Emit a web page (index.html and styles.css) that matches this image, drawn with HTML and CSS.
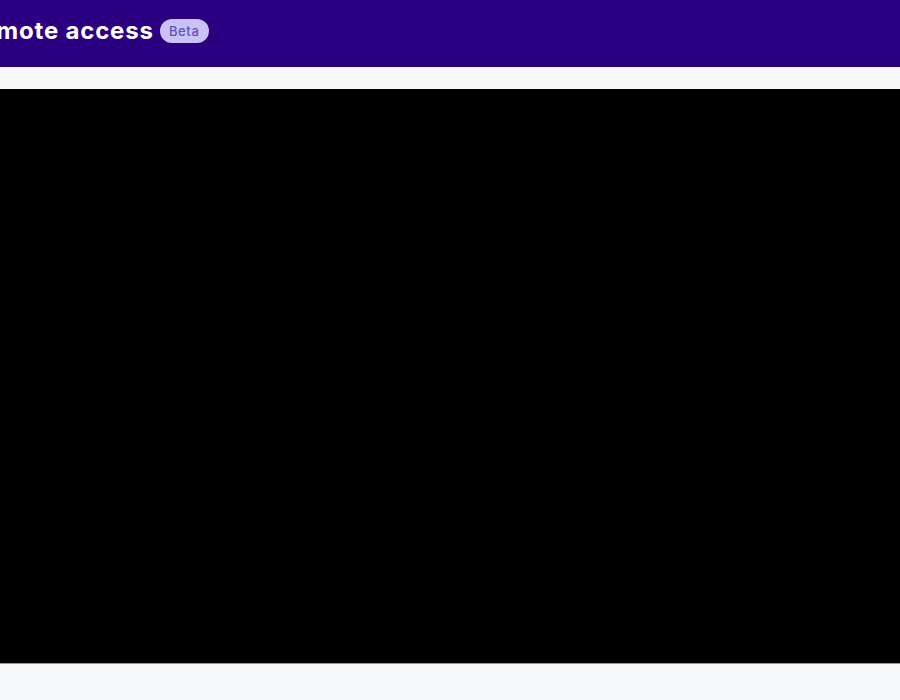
FILE: index.html
```html
<!DOCTYPE html>
<html lang="en">
<head>
<meta charset="utf-8">
<title>Remote access</title>
<link rel="stylesheet" href="styles.css">
</head>
<body>
<header class="topbar">
  <h1 class="title">Remote access</h1>
  <span class="badge">Beta</span>
</header>
<main class="content">
  <div class="screen"></div>
</main>
</body>
</html>
```
FILE: styles.css
```css
html, body {
  margin: 0;
  padding: 0;
  background: #f8f9fb;
  overflow: hidden;
  font-family: Inter, "Open Sans", "Liberation Sans", sans-serif;
}
.topbar {
  height: 67px;
  background: #2b0081;
  display: flex;
  align-items: center;
  gap: 6px;
  padding-bottom: 5px;
  box-sizing: border-box;
}
.title {
  margin: 0 0 0 -35px;
  color: #ffffff;
  font-size: 24px;
  font-weight: 700;
  letter-spacing: 0.8px;
  white-space: nowrap;
  line-height: 1;
}
.badge {
  display: inline-flex;
  align-items: center;
  justify-content: center;
  width: 49px;
  height: 24px;
  border-radius: 12px;
  background: #c9c3f5;
  color: #5f53b5;
  font-size: 13px;
  font-weight: 500;
  letter-spacing: 0.6px;
  box-sizing: border-box;
}
.content {
  padding-top: 22px;
}
.screen {
  height: 574px;
  background: #000000;
  border-bottom: 1px solid #9a9a9a;
}
```
